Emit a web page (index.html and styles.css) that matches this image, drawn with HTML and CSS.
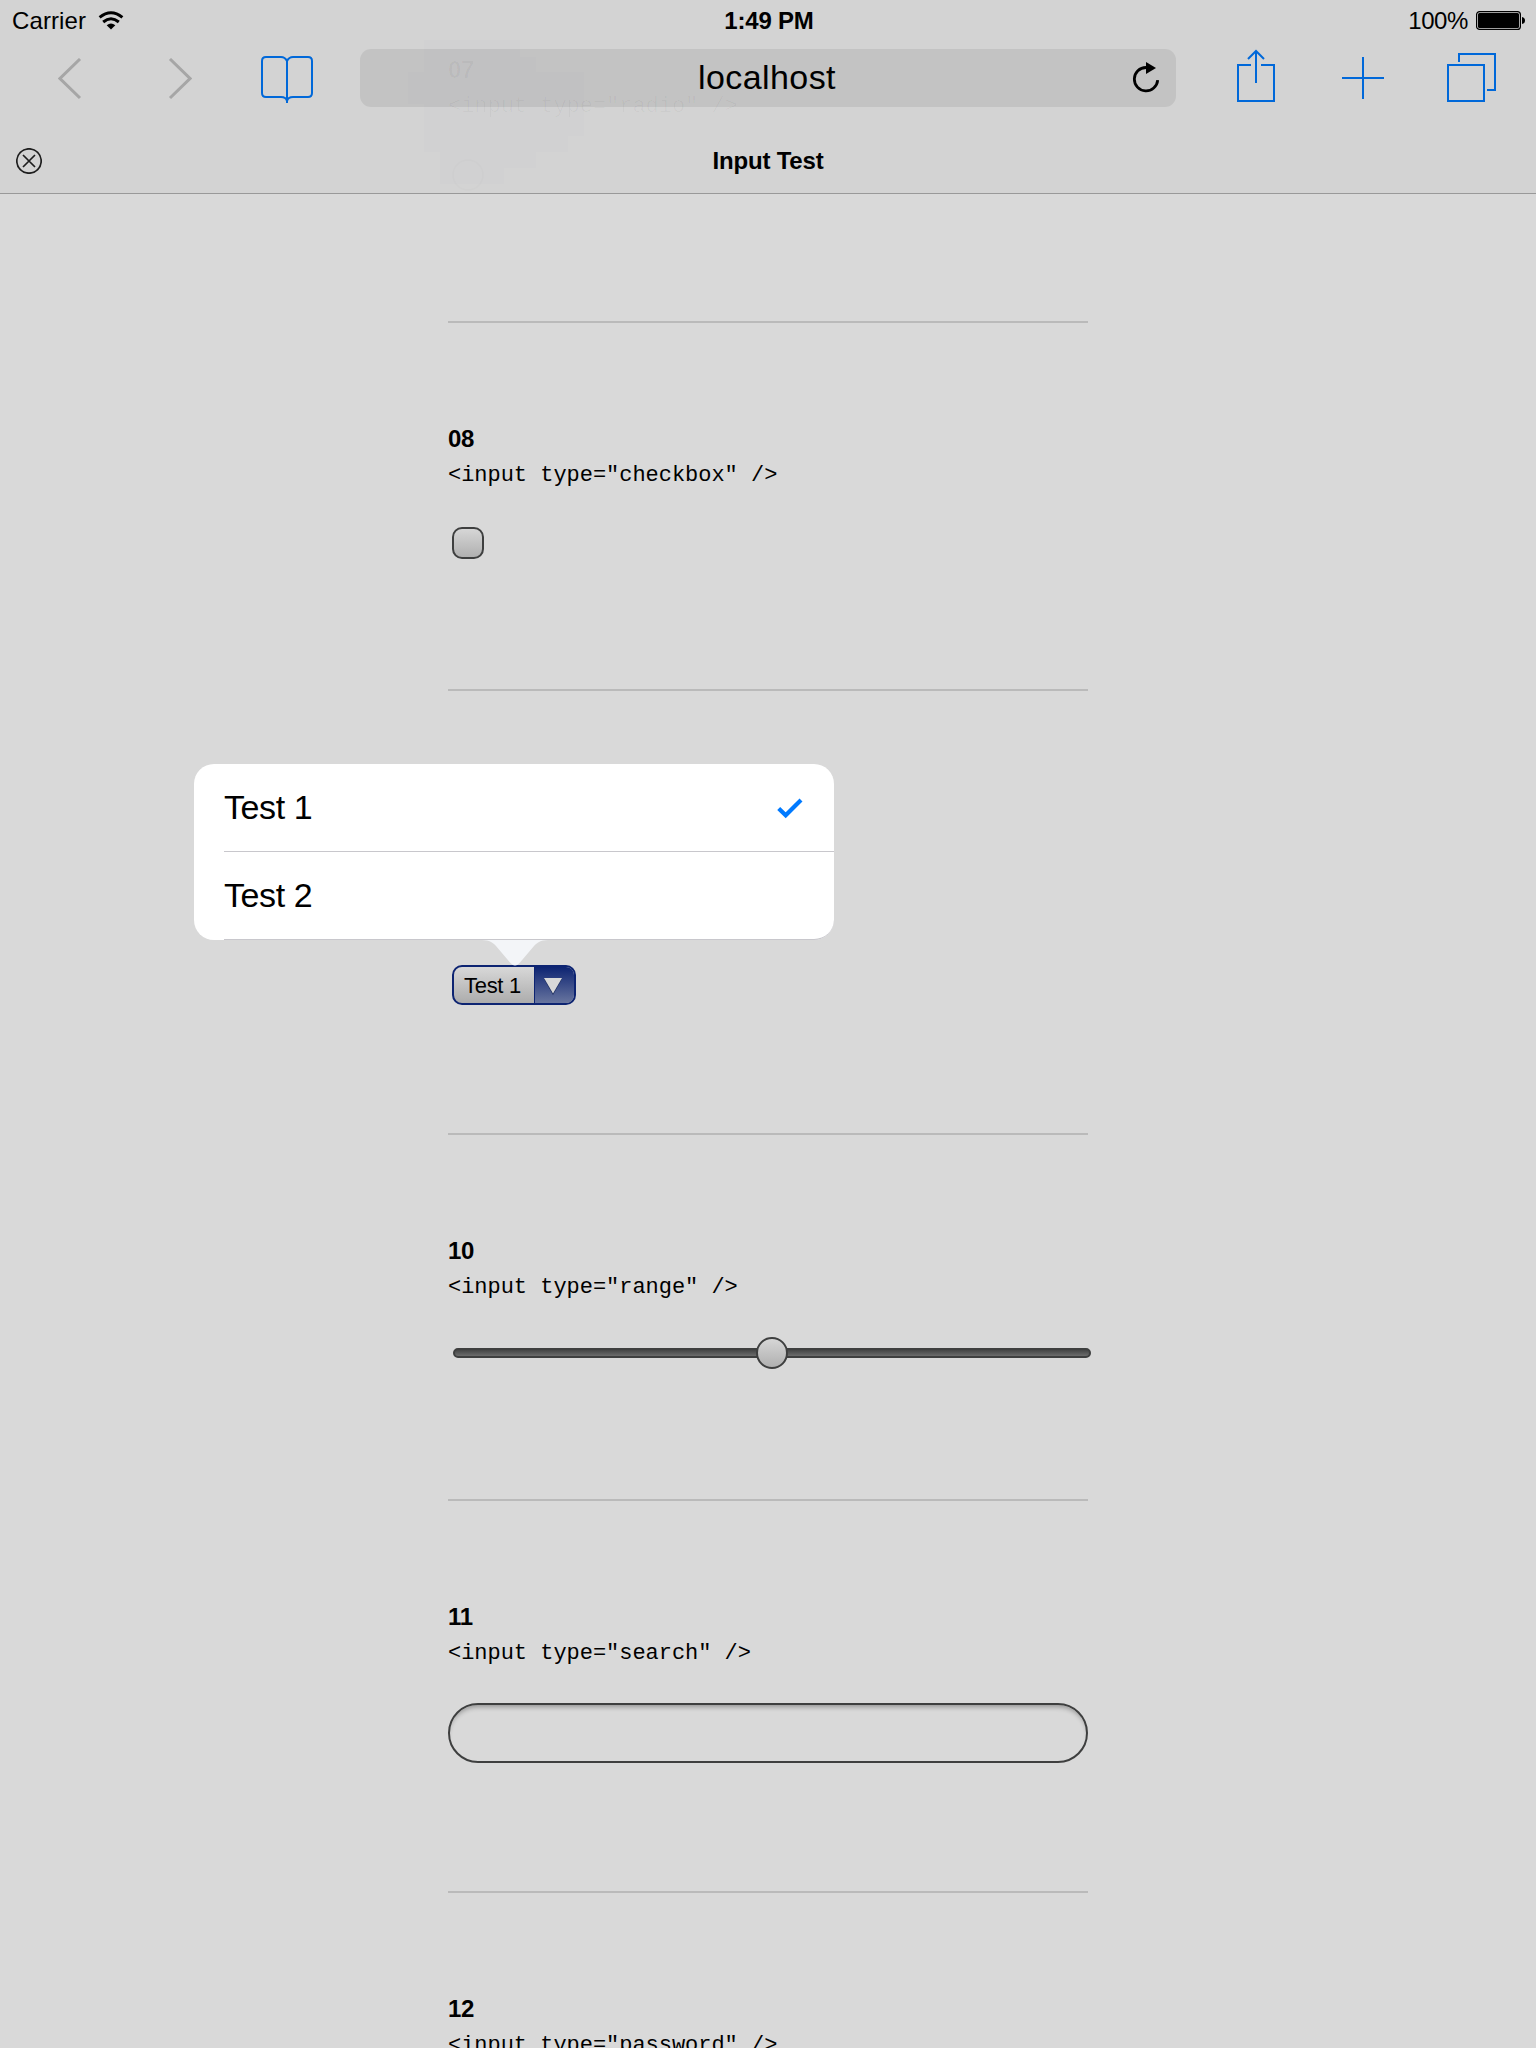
FILE: index.html
```html
<!DOCTYPE html>
<html lang="en">
<head>
<meta charset="utf-8">
<title>Input Test</title>
<link rel="stylesheet" href="styles.css">
</head>
<body>
<header class="chrome">
  <svg class="bleed" width="192" height="160" viewBox="0 0 192 160" aria-hidden="true">
    <path d="M16 0h96v17h16v15h48v64h-16v16h-32v16h-32v16h-64v-32h-16V64H0V32h16z"/>
  </svg>
  <div class="status">
    <div class="carrier">Carrier
      <svg width="26" height="20" viewBox="0 0 26 20"><g fill="none" stroke="#000" stroke-width="3"><path d="M1.600 6.400Q13 -3 24.400 6.400"/><path d="M5.200 11Q13 4.600 20.800 11"/></g><path d="M13 18.500L8.700 14.200Q13 10.600 17.300 14.200z"/></svg>
    </div>
    <div class="clock">1:49 PM</div>
    <div class="battery">100%
      <svg width="50" height="20" viewBox="0 0 50 20"><rect x=".6" y=".6" width="43.800" height="17.800" rx="3" fill="none" stroke="#000" stroke-width="1.200"/><rect x="2" y="2" width="41" height="15" rx="1.500"/><path d="M46 6q3 .5 3 3.500T46 13z"/></svg>
    </div>
  </div>
  <nav class="toolbar">
    <svg class="back" width="24" height="42" viewBox="0 0 24 42"><path d="M22 1L2 20.500L22 40"/></svg>
    <svg class="forward" width="24" height="42" viewBox="0 0 24 42"><path d="M2 1L22 20.500L2 40"/></svg>
    <svg class="blue book" width="52" height="48" viewBox="0 0 52 48"><path d="M26 47V5Q24 1 20 1H5Q1 1 1 5V37Q1 41 5 41H20Q25 41 26 45Q27 41 32 41H47Q51 41 51 37V5Q51 1 47 1H32Q28 1 26 5"/></svg>
    <div class="address">
      <span>localhost</span>
      <svg class="reload" width="28" height="32" viewBox="0 0 28 32"><path d="M14 5.500A11.700 11.700 0 1 0 25.700 18.200" fill="none" stroke="#000" stroke-width="2.800"/><path d="M14 0L24 6L14 12z"/></svg>
    </div>
    <svg class="blue share" width="38" height="53" viewBox="0 0 38 53"><path d="M14 16H1V52H37V16H24M19 34V2M11 10L19 2L27 10"/></svg>
    <svg class="blue plus" width="42" height="42" viewBox="0 0 42 42"><path d="M21 0V42M0 21H42"/></svg>
    <svg class="blue tabs" width="49" height="49" viewBox="0 0 49 49"><path d="M1 12H37V48H1zM12 9V1H48V37H40"/></svg>
  </nav>
  <div class="tabbar">
    <svg class="close" width="26" height="26" viewBox="0 0 26 26"><circle cx="13" cy="13" r="12.200"/><path d="M7 7L19 19M19 7L7 19"/></svg>
    <span>Input Test</span>
  </div>
  <div class="underlay" aria-hidden="true">
    <h2>07</h2>
    <code>&lt;input type="radio" /&gt;</code>
    <i></i>
  </div>
</header>
<main class="content">
  <section class="test checkbox-test">
    <h2>08</h2>
    <code>&lt;input type="checkbox" /&gt;</code>
    <div class="checkbox"></div>
  </section>
  <section class="test select-test">
    <div class="select">
      <span class="value">Test 1</span>
      <span class="drop"><svg width="18" height="17" viewBox="0 0 18 17"><path d="M0 1H18L9 17z" fill="#1a2a5c"/><path d="M0 0H18L9 15.500z" fill="#d9d9d9"/></svg></span>
    </div>
    <div class="popover">
      <div class="option">Test 1
        <svg width="26" height="21" viewBox="0 0 26 21"><path d="M1.700 10.500L8.700 17.300L24 2" fill="none" stroke="#007aff" stroke-width="4.200"/></svg>
      </div>
      <div class="option">Test 2</div>
      <svg class="arrow" width="66" height="26" viewBox="0 0 66 26"><path d="M0 0H66C58 .5 56 2 52 6L38 22.500Q33 28.500 28 22.500L14 6C10 2 8 .5 0 0z" fill="#f3f5f8"/></svg>
    </div>
  </section>
  <section class="test range-test">
    <h2>10</h2>
    <code>&lt;input type="range" /&gt;</code>
    <div class="range"><div class="track"></div><div class="knob"></div></div>
  </section>
  <section class="test search-test">
    <h2>11</h2>
    <code>&lt;input type="search" /&gt;</code>
    <div class="search"></div>
  </section>
  <section class="test password-test">
    <h2>12</h2>
    <code>&lt;input type="password" /&gt;</code>
  </section>
</main>
</body>
</html>
```
FILE: styles.css
```css
* { box-sizing: border-box; }
html, body { margin: 0; height: 2048px; overflow: hidden; }
body {
  background: #d9d9d9;
  color: #000;
  font-family: "Liberation Sans", Arial, sans-serif;
  font-size: 24px;
}
svg { display: block; flex: none; }

/* Browser chrome */
.chrome {
  position: relative;
  height: 194px;
  background: #d3d3d3;
  border-bottom: 1px solid #999;
}
.bleed { position: absolute; left: 408px; top: 40px; fill: rgba(100, 100, 150, .01); }
.status {
  display: grid;
  grid-template-columns: 1fr auto 1fr;
  height: 41px;
  padding: 0 10px 0 12px;
  line-height: 41px;
}
.carrier, .battery { display: flex; align-items: center; }
.carrier { gap: 12px; letter-spacing: .1px; }
.clock { font-weight: bold; letter-spacing: -.2px; }
.battery { justify-content: flex-end; gap: 8px; letter-spacing: -.4px; }
.toolbar {
  display: flex;
  align-items: flex-start;
  height: 75px;
  padding-left: 58px;
}
.toolbar svg { fill: none; stroke-width: 2; }
.toolbar .back, .toolbar .forward { stroke: #a6a6a6; stroke-width: 3; margin-top: 17px; }
.toolbar .forward { margin-left: 86px; }
.toolbar .blue { stroke: #0068d9; }
.toolbar .book { margin: 15px 47px 0 69px; }
.address {
  position: relative;
  display: flex;
  align-items: center;
  justify-content: center;
  width: 816px;
  height: 58px;
  margin-top: 8px;
  padding: 0 2px 2px 0;
  border-radius: 11px;
  background: rgba(0, 0, 0, .076);
  font-size: 34px;
  letter-spacing: .4px;
}
.toolbar .reload { position: absolute; right: 16px; top: 13px; fill: #000; }
.toolbar .share { margin: 8px 0 0 61px; }
.toolbar .plus { margin: 16px 0 0 67px; }
.toolbar .tabs { margin: 12px 0 0 63px; }
.tabbar {
  display: grid;
  grid-template-columns: 1fr auto 1fr;
  align-items: center;
  height: 77px;
  padding: 8px 16px 0;
  margin-top: 2px;
  font-weight: bold;
  letter-spacing: -.2px;
}
.close { fill: none; stroke: #1e1e1e; stroke-width: 1.7; }
.underlay {
  position: absolute;
  left: 448px;
  top: 53px;
  color: rgba(0, 0, 0, .03);
}
.underlay i {
  display: block;
  width: 32px;
  height: 32px;
  margin: 35px 0 0 4px;
  border: 2px solid rgba(0, 0, 0, .012);
  border-radius: 50%;
}

/* Test page */
.content { width: 640px; margin: 0 auto; padding-top: 127px; }
.test { position: relative; border-top: 2px solid #bababa; padding-top: 99px; }
.checkbox-test { height: 368px; }
.select-test { height: 444px; padding-top: 274px; }
.range-test { height: 366px; }
.search-test { height: 392px; }
h2 { margin: 0; font-size: 24px; line-height: 34px; letter-spacing: -.3px; }
code {
  display: block;
  margin-top: 3px;
  font: 22px/34px "Courier New", "Liberation Mono", monospace;
  letter-spacing: -.03px;
}
.checkbox {
  width: 32px;
  height: 32px;
  margin: 34px 0 0 4px;
  border: 2px solid #3e3f3f;
  border-radius: 10px;
  background: linear-gradient(#d6d6d6, #b0b0b0);
}
.select {
  display: flex;
  width: 124px;
  height: 40px;
  margin-left: 4px;
  border: 2px solid #0d2472;
  border-radius: 10px;
  overflow: hidden;
  background: linear-gradient(#d8d8d8, #acacac);
  font-size: 22px;
  line-height: 38px;
}
.value { width: 80px; padding-left: 10px; letter-spacing: -.3px; white-space: nowrap; }
.drop {
  display: flex;
  flex: 1;
  justify-content: center;
  padding: 11px 3px 0 0;
  border-left: 1px solid #0d2472;
  background: linear-gradient(#0d2472, #68759f);
}
.range { display: grid; align-items: center; height: 32px; margin-top: 32px; }
.track, .knob { grid-area: 1 / 1; }
.track {
  width: 638px;
  height: 10px;
  margin-left: 5px;
  border: 2px solid #3e3f3f;
  border-radius: 5px;
  background: linear-gradient(#444545, #6c6c6c);
}
.knob {
  width: 32px;
  height: 32px;
  margin-left: 308px;
  border: 2px solid #3e3f3f;
  border-radius: 50%;
  background: linear-gradient(#d6d6d6, #b0b0b0);
}
.search {
  height: 60px;
  margin-top: 32px;
  border: 2px solid #3e3f3f;
  border-radius: 30px;
  box-shadow: inset 0 5px 5px -3px rgba(0, 0, 0, .32);
}

/* Option list opened from the select */
.popover {
  position: absolute;
  left: -254px;
  top: 73px;
  width: 640px;
  height: 176px;
  border-radius: 20px;
  background: #fff;
  font-size: 34px;
}
.option {
  display: flex;
  align-items: center;
  justify-content: space-between;
  height: 88px;
  margin-left: 30px;
  padding-right: 31px;
  border-bottom: 1px solid #c8c7cc;
  letter-spacing: -.4px;
}
.option svg { margin-top: 2px; }
.option:nth-child(2) { border-radius: 0 0 20px 0; }
.arrow { position: absolute; left: 288px; top: 176px; }
```
